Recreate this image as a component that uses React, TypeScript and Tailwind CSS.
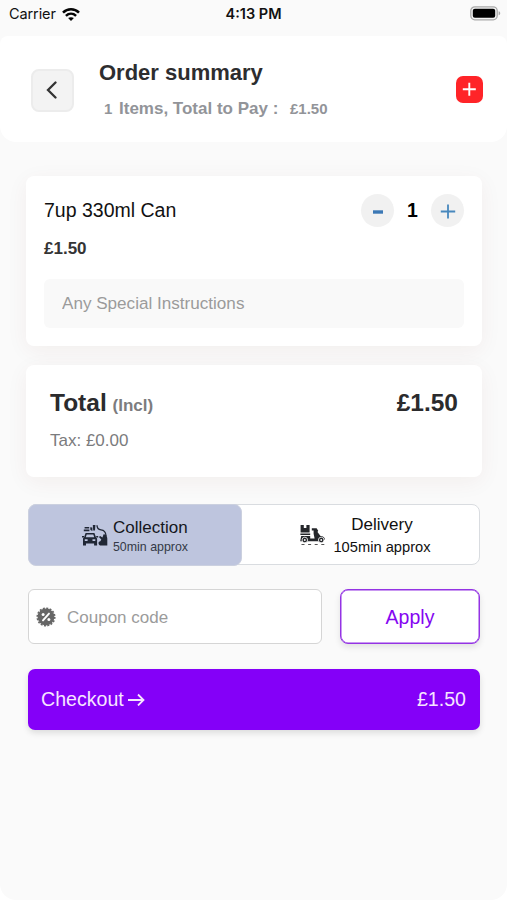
import type { ReactNode } from "react";

function WifiIcon() {
  return (
    <svg width="18" height="13" viewBox="0 0 18 13" fill="none" stroke="#050505" strokeWidth="2.5">
      <path d="M1 4.7C5.5.2 12.5.2 17 4.7" />
      <path d="M3.9 7.9c3-2.8 7.2-2.8 10.2 0" />
      <path d="M6.1 10.1c1.8-1.3 4-1.3 5.8 0L9 13Z" fill="#050505" stroke="none" />
    </svg>
  );
}

function BatteryIcon() {
  return (
    <svg width="31" height="15" viewBox="0 0 31 15">
      <rect x=".8" y=".8" width="26.4" height="13" rx="4" fill="#f5f5f5" stroke="#a9a9a9" strokeWidth="1.3" />
      <rect x="2.8" y="2.8" width="22.4" height="9" rx="2" fill="#000" />
      <path d="M28.6 5.3c2.2.7 2.2 3.3 0 4Z" fill="#a9a9a9" />
    </svg>
  );
}

function CollectionIcon() {
  return (
    <svg width="26" height="22" viewBox="0 0 26 22" fill="#202735">
      <path
        fillRule="evenodd"
        d="M3.6 9h8.8l1.6 4.2 1.1 1.3v7h-3v-2H4v2H1v-7l1.1-1.3ZM4.7 10.6l-.9 2.6h8.4l-.9-2.6ZM2.8 15.3v1.6h2.8v-1.6ZM10.5 15.3v1.6h2.8v-1.6Z"
      />
      <path d="M0 12h2v1.4H0ZM14.2 12h2v1.4h-2Z" />
      <path d="M2.6 3h4.6v1.5H2.6ZM1.8 5.4h5.6v1.8H1.8ZM8.2 3.2l2.2.4V7L8.4 6ZM10.8 1h2.6l-.4 5.6h-1.8Z" />
      <path d="M15 1.3c0 3.2 1.2 4.3 4 4.6 3.3.3 4.8 2.2 5.1 6.2" fill="none" stroke="#202735" strokeWidth="1.3" />
      <path d="M21.6 10.2c2.2 0 3.6 1.8 3.7 4.2v7.1h-7.2c-2.3-1.4-2-3.9.2-4.2l1-1.8-2.4-2.4 1.3-1.2 2.2 1.6Z" />
    </svg>
  );
}

function DeliveryIcon() {
  return (
    <svg width="26" height="22" viewBox="0 0 26 22" fill="#25272b">
      <path d="M.6 1h3.2v3h2.6V1h3.2v7.6H.6ZM.4 9.4h9.8v1.7H.4Z" />
      <path d="M1.2 12h9v2.6h4.4l-1-4.8V6.6h-1.8V4.2h4.8l1.6 2.5-.7 1.3 3 3.9c2.6 0 4.2 1.2 4.5 3.8l-3.4-.6-2 2.2H.2Z" />
      <circle cx="4.8" cy="16" r="2.8" stroke="#fff" strokeWidth=".8" />
      <circle cx="21.2" cy="16" r="2.8" stroke="#fff" strokeWidth=".8" />
      <circle cx="4.8" cy="16" r=".9" fill="#fff" />
      <circle cx="21.2" cy="16" r=".9" fill="#fff" />
      <path d="M1.5 20.5h23" stroke="#555" strokeWidth="1" strokeDasharray="3 3.6" />
    </svg>
  );
}

function CouponIcon() {
  return (
    <svg width="20" height="20" viewBox="0 0 20 20">
      <circle cx="10" cy="10" r="8.4" fill="#666" />
      <circle cx="10" cy="10" r="8.8" fill="none" stroke="#666" strokeWidth="1.5" strokeDasharray="2 1.456" />
      <path d="m7 13.4 6-6.8" stroke="#fff" strokeWidth="1.9" strokeLinecap="round" />
      <circle cx="7.1" cy="7.4" r="1.5" fill="#fff" />
      <circle cx="12.9" cy="12.6" r="1.5" fill="#fff" />
    </svg>
  );
}

function RoundButton({ label, children }: { label: string; children: ReactNode }) {
  return (
    <button aria-label={label} className="flex size-[33px] items-center justify-center rounded-full bg-[#f1f1f1]">
      {children}
    </button>
  );
}

function StatusBar() {
  return (
    <div className="grid h-9 grid-cols-3 items-start pt-[4px] font-['Inter',sans-serif] text-[14.5px] leading-5 text-[#111]">
      <div className="flex items-center gap-[6px] pl-[9px]">
        <span className="tracking-[-0.1px]">Carrier</span>
        <WifiIcon />
      </div>
      <span className="text-center font-semibold">4:13 PM</span>
      <div className="flex justify-end pt-[2px] pr-[6px]">
        <BatteryIcon />
      </div>
    </div>
  );
}

function Header() {
  return (
    <header className="flex h-[106px] rounded-t-lg rounded-b-2xl bg-white pl-[31px] pr-6">
      <button
        aria-label="Back"
        className="mt-[33px] flex size-[43px] items-center justify-center rounded-lg border-2 border-[#ececec] bg-[#f3f3f3] pr-[2px] pb-[2px]"
      >
        <svg width="12" height="18" viewBox="0 0 12 18" fill="none" stroke="#333" strokeWidth="2.3" strokeLinecap="round">
          <path d="M9.5 1.5 2 9l7.5 7.5" />
        </svg>
      </button>
      <div className="ml-[25px] flex-1 pt-[23px]">
        <h1 className="text-[22px] font-bold leading-7 text-[#2d2d2f]">Order summary</h1>
        <p className="mt-[10px] flex items-baseline pl-[5px] font-bold leading-6 text-[#929499]">
          <span className="w-[15px] text-[15px]">1</span>
          <span className="w-[171px] text-[17px]">Items, Total to Pay :</span>
          <span className="text-[15px]">£1.50</span>
        </p>
      </div>
      <button aria-label="Add items" className="mt-10 flex size-[27px] items-center justify-center rounded-[7px] bg-[#ff2428]">
        <svg width="15" height="15" viewBox="0 0 15 15" stroke="#fff" strokeWidth="1.9">
          <path d="M7.3 .8v13M.8 7.3h13" />
        </svg>
      </button>
    </header>
  );
}

function OrderItem() {
  return (
    <section className="h-[170px] rounded-lg bg-white px-[18px] pt-[18px] shadow-[0_5px_22px_rgba(110,40,15,0.055)]">
      <div className="flex h-[33px] items-center">
        <h2 className="flex-1 pb-[2px] text-[19.5px] leading-6 text-[#111]">7up 330ml Can</h2>
        <RoundButton label="Remove one">
          <svg width="12" height="6" viewBox="0 0 12 6">
            <path d="M1 4h10" stroke="#3b78b5" strokeWidth="3.4" />
          </svg>
        </RoundButton>
        <span className="w-[37px] pb-[2px] text-center text-[19.5px] font-bold leading-6 text-black">1</span>
        <RoundButton label="Add one">
          <svg width="16" height="16" viewBox="0 0 16 16" stroke="#4888bd" strokeWidth="1.8">
            <path d="M8 1.5v14M.8 8.5h14.4" />
          </svg>
        </RoundButton>
      </div>
      <p className="mt-[10px] text-[17px] font-bold leading-6 text-[#343434]">£1.50</p>
      <input
        className="mt-[18px] block h-[49px] w-full rounded-md bg-[#f9f9f9] px-[18px] text-[17.1px] outline-none placeholder:text-[#9b9b9b]"
        placeholder="Any Special Instructions"
      />
    </section>
  );
}

function TotalCard() {
  return (
    <section className="mt-[19px] h-[112px] rounded-lg bg-white px-6 pt-[22px] shadow-[0_5px_22px_rgba(110,40,15,0.055)]">
      <div className="flex items-baseline justify-between text-[24.5px] font-bold leading-8 text-[#2b2b2d]">
        <div>
          Total <span className="-ml-px text-[17px] text-[#7c7c7e]">(Incl)</span>
        </div>
        <span>£1.50</span>
      </div>
      <p className="mt-[7px] text-[17px] leading-6 text-[#7b7b7d]">Tax: £0.00</p>
    </section>
  );
}

function DeliveryOptions() {
  return (
    <div className="flex h-[61px] rounded-lg border border-[#d9dce0] bg-white">
      <button className="-mt-px -ml-px flex h-[62px] w-[214px] items-center justify-center rounded-lg border border-[#cbd0df] bg-[#bec5de]">
        <CollectionIcon />
        <span className="ml-[5px] flex flex-col pt-[5px] text-left">
          <span className="text-[17px] leading-5 text-[#15171c]">Collection</span>
          <span className="text-[12.4px] leading-[19px] text-[#343947]">50min approx</span>
        </span>
      </button>
      <button className="flex flex-1 items-center justify-center pr-[14px] pl-[24px]">
        <DeliveryIcon />
        <span className="ml-[7px] flex flex-col whitespace-nowrap pt-[2px] text-center text-[#111]">
          <span className="text-[17px] leading-[23px]">Delivery</span>
          <span className="text-[14.7px] leading-[22px]">105min approx</span>
        </span>
      </button>
    </div>
  );
}

function Coupon() {
  return (
    <div className="mt-6 flex gap-[18px]">
      <label className="flex h-[55px] w-[294px] items-center rounded-md border border-[#d5d5d5] bg-white pl-[7px]">
        <CouponIcon />
        <input
          className="ml-[11px] w-[200px] pt-[2px] text-[17px] outline-none placeholder:text-[#9b9b9b]"
          placeholder="Coupon code"
        />
      </label>
      <button className="h-[55px] flex-1 rounded-lg border border-[#9433e4] bg-white pt-[2px] text-[19.5px] text-[#8506f1] shadow-[inset_0_0_0_0.5px_#9433e4,0_3px_6px_rgba(0,0,0,0.1)]">
        Apply
      </button>
    </div>
  );
}

export default function App() {
  return (
    <div className="h-[900px] w-[507px] overflow-hidden bg-white font-['Liberation_Sans',Arial,sans-serif]">
      <div className="h-full rounded-b-2xl bg-[#fafafa]">
        <StatusBar />
        <Header />
        <main className="pt-[34px] pr-[25px] pl-[26px]">
          <OrderItem />
          <TotalCard />
          <div className="mt-[27px] mr-[2px] ml-[2px]">
            <DeliveryOptions />
            <Coupon />
            <button className="mt-[25px] flex h-[61px] w-full items-center justify-between rounded-[7px] bg-[#8400f8] pr-[14px] pl-[13px] text-[19.6px] text-[#f6e5ff] shadow-[0_3px_6px_rgba(0,0,0,0.12)]">
              <span className="flex items-center">
                Checkout
                <svg className="ml-[4px]" width="17" height="14" viewBox="0 0 17 14" fill="none" stroke="#f6e5ff" strokeWidth="1.8">
                  <path d="M0 8h15.5M10 2.5 15.5 8 10 13.5" />
                </svg>
              </span>
              <span>£1.50</span>
            </button>
          </div>
        </main>
      </div>
    </div>
  );
}
